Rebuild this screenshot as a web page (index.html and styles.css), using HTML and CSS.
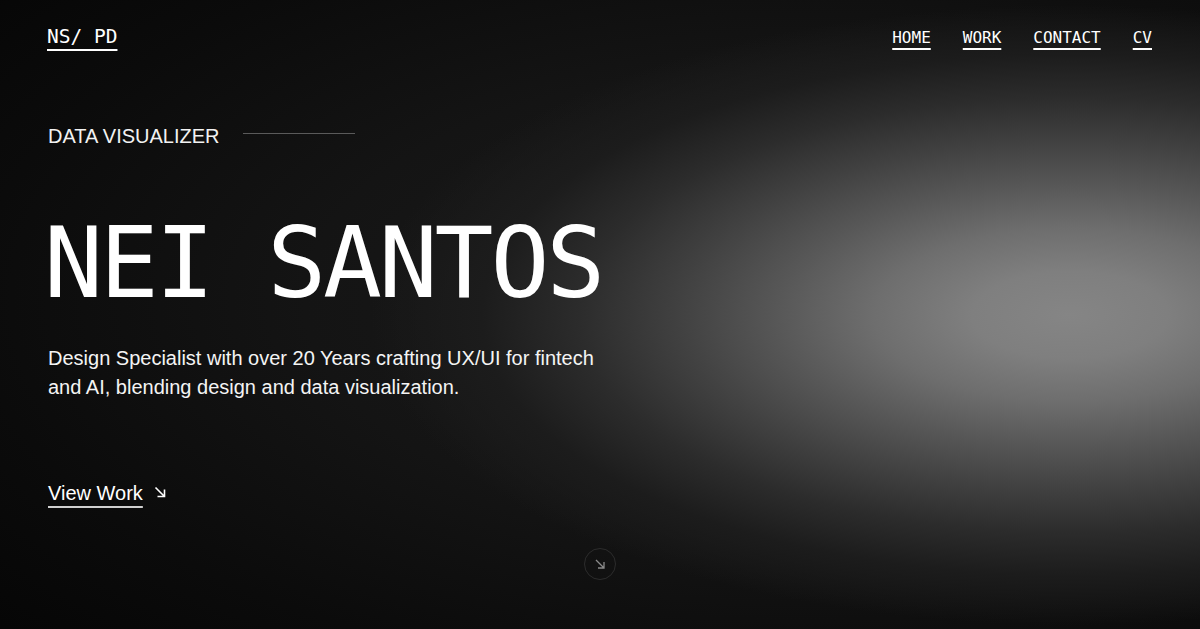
FILE: index.html
```html
<!DOCTYPE html>
<html lang="en">
<head>
<meta charset="utf-8">
<title>Nei Santos — Data Visualizer</title>
<link rel="stylesheet" href="styles.css">
</head>
<body>
<div class="page">
  <header class="topbar">
    <a class="logo" href="#">NS/ PD</a>
    <nav class="nav">
      <a href="#">HOME</a>
      <a href="#">WORK</a>
      <a href="#">CONTACT</a>
      <a href="#">CV</a>
    </nav>
  </header>
  <main class="hero">
    <div class="eyebrow">
      <span>DATA VISUALIZER</span>
      <span class="rule"></span>
    </div>
    <h1 class="title">NEI SANTOS</h1>
    <p class="lead">Design Specialist with over 20 Years crafting UX/UI for fintech and AI, blending design and data visualization.</p>
    <a class="cta" href="#"><span class="cta-text">View Work</span>
      <svg class="cta-icon" width="12" height="12" viewBox="0 0 12 12" aria-hidden="true"><path d="M1.5 1.5 L10.5 10.5 M10.5 3.5 V10.5 H3.5" fill="none" stroke="#fff" stroke-width="1.6"/></svg>
    </a>
    <div class="scroll-row">
      <a class="scroll" href="#" aria-label="Scroll down">
        <svg width="12" height="12" viewBox="0 0 12 12" aria-hidden="true"><path d="M2 2 L10 10 M10 4 V10 H4" fill="none" stroke="#8a8a8a" stroke-width="1.3"/></svg>
      </a>
    </div>
  </main>
</div>
</body>
</html>
```

FILE: styles.css
```css
html, body {
  margin: 0;
  padding: 0;
}
body {
  width: 1200px;
  height: 629px;
  overflow: hidden;
  color: #fff;
  background-color: #070707;
  background-image:
    radial-gradient(ellipse 700px 310px at 1070px 315px,
      #858585 0%, #7f7f7f 14%, #6e6e6e 28%, #575757 42%, #414141 56%, #2c2c2c 70%, #1c1c1c 84%, rgba(20,20,20,0) 100%),
    radial-gradient(ellipse 1100px 520px at 800px 300px,
      #1c1c1c 0%, #141414 45%, #0b0b0b 75%, #050505 100%);
  font-family: "Liberation Sans", Arial, sans-serif;
}
a {
  color: #fff;
}
.page {
  height: 629px;
  box-sizing: border-box;
  padding: 25px 48px 0 47px;
  display: flex;
  flex-direction: column;
}
.topbar {
  display: flex;
  justify-content: space-between;
  align-items: baseline;
}
.logo {
  font-family: "DejaVu Sans Mono", monospace;
  font-size: 19.5px;
  line-height: 24px;
  text-decoration: underline;
  text-decoration-thickness: 2px;
  text-underline-offset: 6px;
}
.nav {
  display: flex;
  gap: 32px;
}
.nav a {
  font-family: "DejaVu Sans Mono", monospace;
  font-size: 16px;
  line-height: 24px;
  text-decoration: underline;
  text-decoration-thickness: 2px;
  text-underline-offset: 5px;
}
.hero {
  display: flex;
  flex-direction: column;
  align-items: flex-start;
  padding-left: 1px;
}
.eyebrow {
  margin-top: 74px;
  display: flex;
  align-items: center;
  gap: 23px;
  font-size: 20px;
  line-height: 24px;
  color: #f2f2f2;
}
.rule {
  display: block;
  width: 112px;
  height: 1px;
  background: #5a5a5a;
  margin-top: -5px;
}
.title {
  margin: 66px 0 0 -4px;
  font-family: "DejaVu Sans Mono", monospace;
  font-weight: normal;
  font-size: 98px;
  line-height: 98px;
  letter-spacing: -3.2px;
  color: #fff;
}
.lead {
  margin: 32px 0 0;
  max-width: 570px;
  font-size: 20px;
  line-height: 29px;
  color: #f4f4f4;
}
.cta {
  margin-top: 79px;
  display: flex;
  align-items: center;
  gap: 11px;
  text-decoration: none;
  font-size: 20px;
  line-height: 24px;
}
.cta-text {
  text-decoration: underline;
  text-decoration-color: #d0d0d0;
  text-decoration-thickness: 2px;
  text-underline-offset: 6px;
}
.cta-icon {
  margin-top: -3px;
}
.scroll-row {
  align-self: stretch;
  display: flex;
  justify-content: center;
  margin-top: 43px;
  margin-left: -1px;
}
.scroll {
  width: 30px;
  height: 30px;
  border: 1px solid #2c2c2c;
  border-radius: 50%;
  display: flex;
  align-items: center;
  justify-content: center;
}
```
